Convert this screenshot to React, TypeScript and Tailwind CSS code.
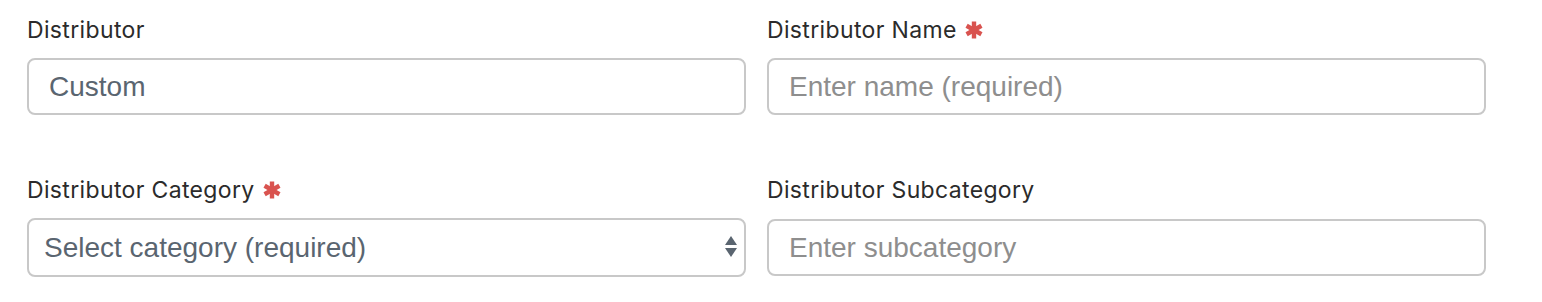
import React from "react";

const Star = () => (
  <svg width="18" height="18" viewBox="0 0 18 18" className="inline-block ml-[8px] align-[-1px]">
    <g stroke="#d9534f" strokeWidth="4.4">
      <line x1="9" y1="0.5" x2="9" y2="17.5" />
      <line x1="1.6" y1="4.75" x2="16.4" y2="13.25" />
      <line x1="1.6" y1="13.25" x2="16.4" y2="4.75" />
    </g>
  </svg>
);

const Label = ({ children, req }: { children: React.ReactNode; req?: boolean }) => (
  <label className="block h-[30px] leading-[30px] text-[23px] tracking-[0.35px] text-[#2b2b2b] font-['Inter',sans-serif]">
    {children}
    {req && <Star />}
  </label>
);

const inputCls =
  "block w-full h-[57px] rounded-[8px] border-2 border-[#c8c8c8] bg-white pl-[20px] pr-3 text-[28px] font-['Liberation_Sans',Arial,sans-serif] text-[#5a6570] placeholder:text-[#8e8e8e] outline-none";

export default function App() {
  return (
    <div className="w-[1542px] h-[302px] bg-white pl-[27px] pt-[15px]">
      <div className="grid grid-cols-[719px_719px] gap-x-[21px]">
        <div>
          <Label>Distributor</Label>
          <input className={inputCls + " mt-[13px]"} defaultValue="Custom" readOnly />
        </div>
        <div>
          <Label req>Distributor Name</Label>
          <input className={inputCls + " mt-[13px]"} placeholder="Enter name (required)" />
        </div>
        <div className="mt-[60px]">
          <Label req>Distributor Category</Label>
          <div className="relative mt-[13px]">
            <select
              className="block w-full h-[59px] appearance-none rounded-[8px] border-2 border-[#c8c8c8] bg-white pl-[15px] pr-10 text-[28px] font-['Liberation_Sans',Arial,sans-serif] text-[#5a6570] outline-none"
              defaultValue=""
            >
              <option value="">Select category (required)</option>
            </select>
            <svg
              width="14"
              height="24"
              viewBox="0 0 14 24"
              className="absolute right-[8px] top-[17px] pointer-events-none"
            >
              <path d="M7 1 L13 10 L1 10 Z" fill="#5a6570" />
              <path d="M1 13 L13 13 L7 22 Z" fill="#5a6570" />
            </svg>
          </div>
        </div>
        <div className="mt-[60px]">
          <Label>Distributor Subcategory</Label>
          <input className={inputCls + " mt-[14px] h-[56px]"} placeholder="Enter subcategory" />
        </div>
      </div>
    </div>
  );
}
